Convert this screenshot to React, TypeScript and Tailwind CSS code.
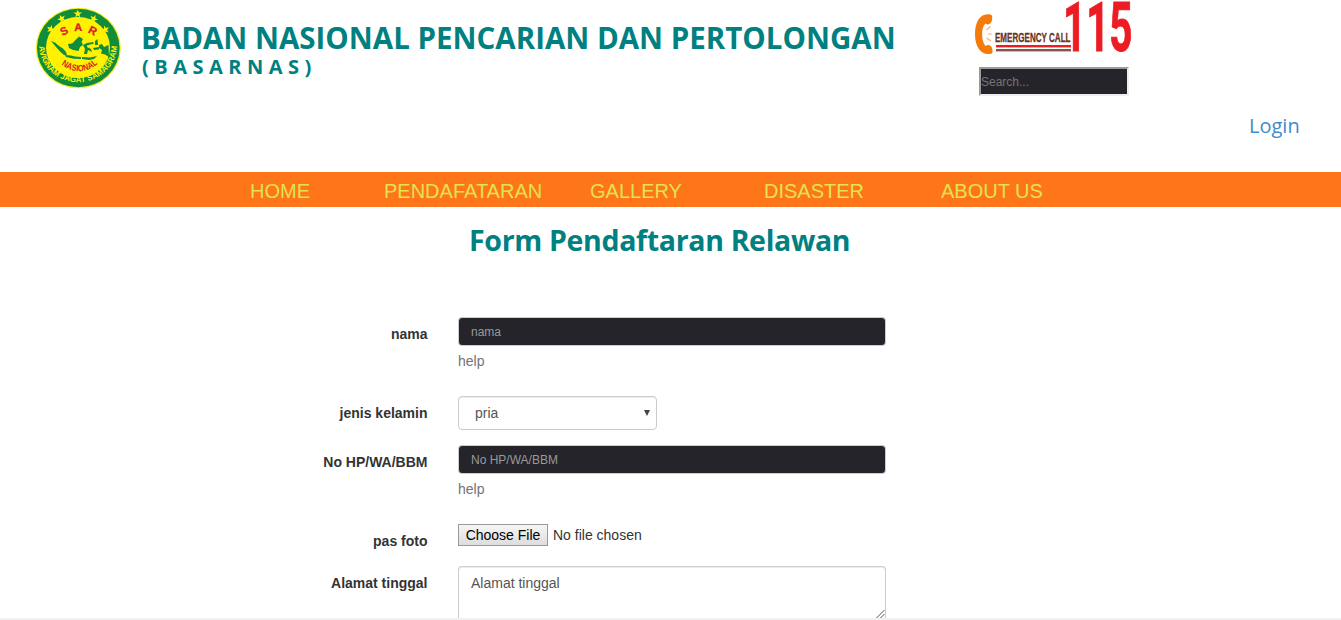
import type { ReactNode } from 'react';

function SarLogo() {
  const stars = [
    [15.7, 22.3, -56],
    [26.7, 11.8, -28],
    [42.8, 6.8, 0],
    [58.6, 12, 28],
    [70.3, 22.8, 56],
  ];
  return (
    <svg width="86" height="82" viewBox="0 0 86 82" className="block shrink-0">
      <defs>
        <path id="motto" d="M 4 38 A 39 37.2 0 0 0 82 38" />
        <path id="sar" d="M 22 33.5 Q 43.5 14.5 65 33.5" />
        <path id="nasional" d="M 24 56 Q 45 73 65 55" />
        <polygon id="star" points="0,-4.4 1.1,-1.4 4.2,-1.4 1.7,0.6 2.6,3.6 0,1.8 -2.6,3.6 -1.7,0.6 -4.2,-1.4 -1.1,-1.4" />
      </defs>
      <ellipse cx="43.3" cy="41" rx="42.5" ry="40.3" fill="#f3ee1c" />
      <ellipse cx="43.3" cy="41" rx="41.3" ry="39.2" fill="#118c3b" />
      <ellipse cx="43" cy="40.5" rx="32" ry="30.5" fill="#fff200" />
      {stars.map(([x, y, a]) => (
        <use key={a} href="#star" fill="#fff200" transform={`translate(${x} ${y}) rotate(${a})`} />
      ))}
      <g fill="#118c3b">
        <path d="M16 34 L20 35.5 L24 39 L28 41.5 L31 45 L32 48.5 L29 48 L25 44.5 L21 40 Z" />
        <path d="M30 48 L36 48.5 L40 49.5 L46 50 L46 52 L39 51.8 L31 50 Z" />
        <path d="M33 37 L37 36.5 L40 33.5 L44 29.5 L48 32 L46.5 35 L48 38 L45 40 L43.5 44 L38 43 L34 41 Z" />
        <path d="M48 38 L52 36 L58 35 L59 36.5 L52 38.5 L52 40 L56 42 L57 45 L53 43 L52 47 L49 47 L50 42 Z" />
        <path d="M60 34 L62.5 32 L63 38 L60 38 Z M58 41 L64 40 L64 42.5 L59 43 Z" />
        <path d="M64 38 L67 37 L69 40 L73.5 38 L74 50 L70 47.5 L66 46.5 L67 43 L64 41 Z" />
        <path d="M47 50 L55 50.5 L62 49 L59 52 L54 53 L47 52 Z" />
      </g>
      <text fill="#d61f26" stroke="#d61f26" strokeWidth="0.3" className="font-['Liberation_Sans'] text-[11px] font-bold">
        <textPath href="#sar" startOffset="50%" textAnchor="middle" textLength="34">SAR</textPath>
      </text>
      <text fill="#d61f26" className="font-['Liberation_Sans'] text-[9px] font-bold">
        <textPath href="#nasional" startOffset="50%" textAnchor="middle" textLength="40" lengthAdjust="spacingAndGlyphs">NASIONAL</textPath>
      </text>
      <text fill="#fff200" className="font-['Liberation_Sans'] text-[8px] font-bold">
        <textPath href="#motto" startOffset="50%" textAnchor="middle" textLength="117">AVIGNAM JAGAT SAMAGRAM</textPath>
      </text>
    </svg>
  );
}

function EmergencyCall() {
  return (
    <svg width="162" height="60" viewBox="0 0 162 60" className="block">
      <path
        d="M15.5 14.5 C5 12.5 0 22 0 34 C0 46 5 55 15 54 C18 54 18 51 17 48 C16 45 13 44 10.5 46 C6 41 6 27 10.5 23.5 C13 25.5 16.5 24 17 20 C17.5 17 17.5 15 15.5 14.5 Z"
        fill="#f47b0b"
      />
      <path d="M11.5 30 L15.5 26.5 M13 34 L17 34 M11.5 38 L16 41" stroke="#f9b26a" strokeWidth="1.2" fill="none" />
      <text x="20" y="42" textLength="75.5" lengthAdjust="spacingAndGlyphs" fill="#6b2f1c" stroke="#6b2f1c" strokeWidth="0.3" className="font-['Liberation_Sans'] text-[13px] font-bold">
        EMERGENCY CALL
      </text>
      <rect x="21" y="45" width="75" height="2.4" fill="#ed1c24" />
      <rect x="21" y="49" width="75" height="2.4" fill="#8a5443" />
      <text x="88" y="51" textLength="69.5" lengthAdjust="spacingAndGlyphs" fill="#ed1c24" stroke="#ed1c24" strokeWidth="1" className="font-['Roboto'] text-[69px] font-bold">
        115
      </text>
    </svg>
  );
}

function Row({ label, height, children }: { label: string; height: string; children: ReactNode }) {
  return (
    <div className={`flex ${height}`}>
      <label className="w-[427.5px] shrink-0 pt-[7px] text-right font-bold leading-5 text-[#333]">{label}</label>
      <div className="ml-[30.5px] w-[428px]">{children}</div>
    </div>
  );
}

function DarkInput({ placeholder }: { placeholder: string }) {
  return (
    <>
      <input
        placeholder={placeholder}
        className="block h-[29px] w-full rounded border border-[#ccc] bg-[#25242a] px-3 text-xs text-white placeholder:text-[#999]"
      />
      <span className="mt-[5px] block leading-5 text-[#737373]">help</span>
    </>
  );
}

export default function App() {
  return (
    <div className="flex h-[620px] w-[1341px] flex-col overflow-hidden bg-white font-['Liberation_Sans',Arial,sans-serif] text-sm text-[#333]">
      <header className="flex h-[172px] shrink-0 pl-[35px]">
        <div className="pt-[7px]">
          <SarLogo />
        </div>
        <div className="ml-5 w-[834px] pt-[18px] font-['Open_Sans',sans-serif] font-bold text-[#008080]">
          <h1 className="whitespace-nowrap text-[29.5px] leading-10">BADAN NASIONAL PENCARIAN DAN PERTOLONGAN</h1>
          <p className="pl-px text-xl leading-[18px] tracking-[5.5px]">(BASARNAS)</p>
        </div>
        <div className="w-[274px]">
          <EmergencyCall />
          <input
            placeholder="Search..."
            className="ml-1 mt-[7px] block h-[29px] w-[150px] border-2 border-b-[#eee] border-l-[#9a9a9a] border-r-[#eee] border-t-[#9a9a9a] bg-[#25242a] text-xs text-white placeholder:text-[#757575]"
          />
        </div>
        <a className="pt-28 font-['Open_Sans',sans-serif] text-xl leading-7 text-[#428bca]">Login</a>
      </header>

      <nav className="flex h-[35px] shrink-0 items-center bg-[#ff7519] pl-[250px] pt-[3px] text-xl text-[#e3e34f]">
        <a className="w-[134px]">HOME</a>
        <a className="w-[206px]">PENDAFATARAN</a>
        <a className="w-[174px]">GALLERY</a>
        <a className="w-[177px]">DISASTER</a>
        <a>ABOUT US</a>
      </nav>

      <main className="h-[411px] shrink-0 overflow-hidden">
        <h2 className="h-[110px] pl-[469px] pt-[13px] font-['Open_Sans',sans-serif] text-[28.5px] font-bold leading-10 tracking-[-0.33px] text-[#008080]">
          Form Pendaftaran Relawan
        </h2>
        <Row label="nama" height="h-[79px]">
          <DarkInput placeholder="nama" />
        </Row>
        <Row label="jenis kelamin" height="h-[49px]">
          <div className="flex h-[34px] w-[199px] items-center justify-between rounded border border-[#ccc] pl-4 pr-[6px] text-[#555] shadow-[inset_0_1px_1px_rgba(0,0,0,0.075)]">
            <span>pria</span>
            <svg width="6" height="6" viewBox="0 0 6 6">
              <path d="M0 0 H6 L3 6 Z" fill="#444" />
            </svg>
          </div>
        </Row>
        <Row label="No HP/WA/BBM" height="h-[79px]">
          <DarkInput placeholder="No HP/WA/BBM" />
        </Row>
        <Row label="pas foto" height="h-[42px]">
          <div className="flex items-center">
            <button className="h-[22px] w-[90px] whitespace-nowrap border border-[#999] bg-linear-to-b from-[#f6f6f6] to-[#dddddd] text-black">
              Choose File
            </button>
            <span className="ml-[5px]">No file chosen</span>
          </div>
        </Row>
        <Row label="Alamat tinggal" height="h-[54px]">
          <div className="relative h-[54px] rounded-t border border-b-0 border-[#ccc] px-3 pt-[6px] leading-5 text-[#555] shadow-[inset_0_1px_1px_rgba(0,0,0,0.075)]">
            Alamat tinggal
            <svg width="9" height="9" viewBox="0 0 9 9" className="absolute bottom-[2px] right-0">
              <path d="M0.5 9 L8.5 1 M4.5 9 L8.5 5" stroke="#555" strokeWidth="1" />
            </svg>
          </div>
        </Row>
      </main>
      <div className="h-[2px] shrink-0 bg-[#f1f1f1]" />
    </div>
  );
}
